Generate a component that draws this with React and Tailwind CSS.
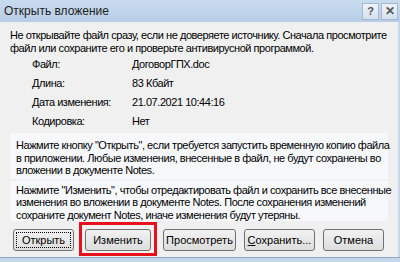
import React from "react";

const font = { fontFamily: "'Liberation Sans', Arial, sans-serif" };

const details = [
  ["Файл:", "ДоговорГПХ.doc"],
  ["Длина:", "83 Кбайт"],
  ["Дата изменения:", "21.07.2021 10:44:16"],
  ["Кодировка:", "Нет"],
];

function DialogButton({ children, width, focused, marked }) {
  return (
    <div className="relative">
      <button
        className={`h-[22px] ${width} rounded-[3px] border border-[#707070] bg-gradient-to-b from-[#f2f2f2] to-[#dddddd] text-[11px] text-black leading-none`}
      >
        <span
          className={`flex h-full w-full items-center justify-center ${
            focused ? "outline outline-1 outline-dotted outline-black -outline-offset-[3px]" : ""
          }`}
        >
          {children}
        </span>
      </button>
      {marked && (
        <div className="pointer-events-none absolute -left-[6px] -right-[6px] -top-[7px] -bottom-[5px] border-[3px] border-[#e8101c]" />
      )}
    </div>
  );
}

export default function App() {
  return (
    <div
      className="flex h-[262px] w-[400px] flex-col overflow-hidden bg-[#f0f0f0] text-[11px] text-black whitespace-nowrap"
      style={font}
    >
      {/* title bar */}
      <div className="flex h-[22px] shrink-0 items-center justify-between bg-gradient-to-b from-[#c9dbef] to-[#b8cde6] pl-[4px] pr-[2px]">
        <span className="text-[12px] text-[#1e1e1e]">Открыть вложение</span>
        <div className="flex gap-[2px]">
          <div className="flex h-[17px] w-[17px] items-center justify-center border border-[#a7b9d0] bg-gradient-to-b from-[#eef3fa] to-[#d5e1ef] text-[11px] font-bold text-[#555]">
            ?
          </div>
          <div className="flex h-[17px] w-[17px] items-center justify-center border border-[#a7b9d0] bg-gradient-to-b from-[#eef3fa] to-[#d5e1ef] text-[12px] font-bold text-[#555]">
            ✕
          </div>
        </div>
      </div>

      <div className="flex flex-1 flex-col border-r-2 border-[#c6d8ed] pl-[10px] pr-[8px] tracking-[-0.45px]">
        {/* warning */}
        <p className="mt-[7px] leading-[13px]">
          Не открывайте файл сразу, если не доверяете источнику. Сначала просмотрите
          <br />
          файл или сохраните его и проверьте антивирусной программой.
        </p>

        {/* file details */}
        <div className="flex flex-col pl-[22px]">
          {details.map(([label, value]) => (
            <div key={label} className="flex h-[19px] items-center">
              <span className="w-[100px]">{label}</span>
              <span>{value}</span>
            </div>
          ))}
        </div>

        {/* hints */}
        <div className="mt-[2px] mr-[2px] flex flex-col gap-[2px]">
          <div className="bg-[#f7f8fc] px-[6px] pt-[6px] pb-[2px] leading-[12.5px]">
            Нажмите кнопку "Открыть", если требуется запустить временную копию файла
            <br />
            в приложении. Любые изменения, внесенные в файл, не будут сохранены во
            <br />
            вложении в документе Notes.
          </div>
          <div className="bg-[#f7f8fc] px-[6px] pt-[3px] pb-0 leading-[12.5px]">
            Нажмите "Изменить", чтобы отредактировать файл и сохранить все внесенные
            <br />
            изменения во вложении в документе Notes. После сохранения изменений
            <br />
            сохраните документ Notes, иначе изменения будут утеряны.
          </div>
        </div>

        {/* buttons */}
        <div className="mt-[8px] flex items-center pl-[3px] tracking-normal">
          <DialogButton width="w-[61px]" focused>
            Открыть
          </DialogButton>
          <div className="ml-[11px]">
            <DialogButton width="w-[66px]" marked>
              Изменить
            </DialogButton>
          </div>
          <div className="ml-[12px]">
            <DialogButton width="w-[73px]">Просмотреть</DialogButton>
          </div>
          <div className="ml-[8px]">
            <DialogButton width="w-[71px]">
              <span>
                <u>С</u>охранить...
              </span>
            </DialogButton>
          </div>
          <div className="ml-[8px]">
            <DialogButton width="w-[61px]">Отмена</DialogButton>
          </div>
        </div>
      </div>

      {/* window bottom edge */}
      <div className="h-[5px] shrink-0 border-t border-[#8ea6c4] bg-[#c6d8ed]" />
    </div>
  );
}
